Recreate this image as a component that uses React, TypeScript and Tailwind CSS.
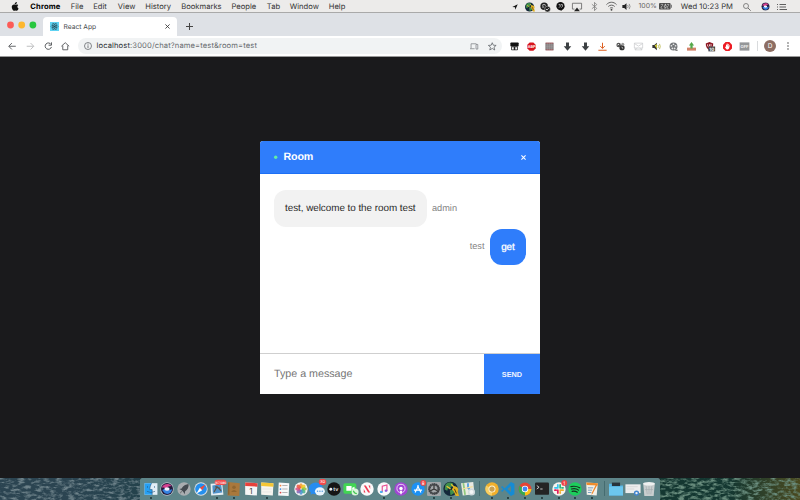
import React, { ReactNode } from "react";

const svgBase = "block shrink-0 overflow-visible";

function Icon({ size = 12, box = 24, children }: { size?: number; box?: number; children: ReactNode }) {
  return (
    <svg className={svgBase} width={size} height={size} viewBox={`0 0 ${box} ${box}`} fill="none">
      {children}
    </svg>
  );
}

const SiriShape = () => (
  <>
    <circle cx="12" cy="12" r="11.5" fill="#b9bec8" />
    <circle cx="12" cy="12" r="10.3" fill="#211b3d" />
    <path d="M3 10C5 3 15 1 20 7c-4 0-7 1-10 5-3-3-5-3-7-2z" fill="#d5408f" />
    <path d="M4 14c4-3 6-2 8-1 3 1 5 1 9-1-1 8-9 11-14 6z" fill="#3582e0" />
    <ellipse cx="12" cy="12" rx="4.5" ry="3" fill="#f5f2ff" />
  </>
);

const GlobeShape = () => (
  <>
    <circle cx="11" cy="12" r="11" fill="#14283a" />
    <path d="M3 6c4-5 9-4 12-2l-3 6-5 1-1 4-4-2zM10 14l6-1 1 5-6 4z" fill="#3f8f4c" />
    <path d="M12 5l5 5M5 8l6 4" stroke="#e8c72d" strokeWidth="2" />
    <path d="M16 8c6 0 8 4 6 8l2 7h-5l-3-7-3-3z" fill="#e2b021" />
    <path d="M17 12l3 7" stroke="#4c3a10" strokeWidth="1.5" />
  </>
);

const menuItems: [string, string][] = [
  ["Chrome", "w-[40.5px] font-bold text-black tracking-[0.12px]"],
  ["File", "w-[22.5px]"],
  ["Edit", "w-[24.5px]"],
  ["View", "w-[27.5px]"],
  ["History", "w-[36px]"],
  ["Bookmarks", "w-[50.2px]"],
  ["People", "w-[35.3px]"],
  ["Tab", "w-[23px]"],
  ["Window", "w-[39px]"],
  ["Help", "w-[30px]"],
];

function MenuBar() {
  return (
    <div className="flex h-[13px] items-center border-b border-[#a9a9a9] bg-[#ecebea] pt-px text-[7.6px] leading-none text-[#333]">
      <div className="-mt-px w-[30.3px] pl-[10.5px]">
        <Icon size={9}>
          <path fill="#111" d="M17 12.6c0-2.600 2.100-3.800 2.200-3.900-1.200-1.800-3.100-2-3.800-2-1.600-.2-3.100.9-3.900.9s-2-.9-3.300-.9C4.500 6.800 2 9.200 2 13.500 2 18 5.300 23.500 8 23.500c1.300 0 1.900-.8 3.500-.8s2.100.8 3.500.8c2.400 0 4.600-4.200 5.100-6-2-.9-3.100-2.700-3.100-4.900zM14.200 4.800C15.300 3.500 16 1.700 15.800 0c-1.600.1-3.400 1-4.500 2.300-1 1.200-1.800 3-1.600 4.600 1.700.1 3.500-.8 4.500-2.100z" />
        </Icon>
      </div>
      {menuItems.map(([label, cls]) => (
        <span key={label} className={`${cls} shrink-0 whitespace-nowrap`}>{label}</span>
      ))}
      <div className="ml-auto flex h-full w-[291.5px] shrink-0 items-center">
        <div className="flex w-[13px] justify-center">
          <Icon size={6}><path d="M1 12L23 1 13 23l-1-10z" fill="#111" /></Icon>
        </div>
        <div className="flex w-[16px] justify-center"><Icon size={10}><GlobeShape /></Icon></div>
        <div className="flex w-[14px] justify-center">
          <Icon size={10}>
            <circle cx="10" cy="10" r="9" fill="#222" /><circle cx="18" cy="17" r="7" fill="#222" stroke="#ecebea" />
            <path d="M5 8q5-4 9 0M5 12h5M14 17l3 2 4-4" stroke="#eee" strokeWidth="2" />
          </Icon>
        </div>
        <div className="flex w-[17px] justify-center">
          <Icon size={9}><circle cx="12" cy="11" r="11" fill="#111" /><path d="M10 19l4 5 3-6z" fill="#111" /><path d="M7 7h4v5l-3 3M13 7h4v5l-3 3" stroke="#ddd" strokeWidth="2" /></Icon>
        </div>
        <div className="flex w-[17px] justify-center">
          <Icon size={10}><path d="M6 17H1V3h22v14h-5" stroke="#666" strokeWidth="2" /><path d="M12 13l7 9H5z" fill="#222" /></Icon>
        </div>
        <div className="flex w-[17px] justify-center">
          <Icon size={9}><path d="M5 6l13 11-6 6V1l6 6L5 18" stroke="#777" strokeWidth="2" /></Icon>
        </div>
        <div className="flex w-[17px] justify-center">
          <Icon size={11}>
            <path d="M1 8c6-7 16-7 22 0M5 12c4-4 10-4 14 0M8.500 16c2-2 5-2 7 0" stroke="#555" strokeWidth="2" />
            <circle cx="12" cy="19" r="2" fill="#444" />
          </Icon>
        </div>
        <div className="flex w-[14px] justify-center">
          <Icon size={9}><path d="M1 8h5l6-5v18l-6-5H1z" fill="#222" /><path d="M15 8q3 4 0 8M19 5q5 7 0 14" stroke="#777" strokeWidth="2" /></Icon>
        </div>
        <span className="ml-[5px] w-[20.5px] shrink-0 whitespace-nowrap text-[6.9px] text-[#666]">100%</span>
        <svg className={svgBase} width="13" height="6.500" viewBox="0 0 28 14">
          <rect width="25" height="14" rx="2" fill="#4d4d4d" />
          <path d="M26 4h2v6h-2z" fill="#777" />
          <path d="M4 3h4l-4 8h4M17 3h4l-4 8h4M11 8l3-6v4h2l-3 6V8z" stroke="#eee" strokeWidth="1.300" />
        </svg>
        <span className="ml-[8.800px] w-[59px] shrink-0 whitespace-nowrap tracking-[0.050px]">Wed 10:23 PM</span>
        <div className="ml-[1.500px] flex w-[12px] justify-center">
          <Icon size={8}><circle cx="9" cy="9" r="7.500" stroke="#555" strokeWidth="2" /><path d="M15 15l8 8" stroke="#555" strokeWidth="2.500" /></Icon>
        </div>
        <div className="ml-[6.500px] flex w-[12px] justify-center"><Icon size={9}><SiriShape /></Icon></div>
        <div className="ml-[5px]">
          <svg className={svgBase} width="10" height="6" viewBox="0 0 20 12">
            <path d="M0 1h2M0 6h2M0 11h2M5 1h13M5 6h13M5 11h15" stroke="#444" strokeWidth="1.700" />
          </svg>
        </div>
      </div>
    </div>
  );
}

function TabStrip() {
  return (
    <div className="flex h-[23px] items-end bg-[#dee1e6]">
      <div className="flex h-full w-[43px] shrink-0 items-center pl-[7px] pt-px">
        <svg className={svgBase} width="30" height="8">
          <circle cx="3.500" cy="4" r="3.400" fill="#fc5b57" />
          <circle cx="14.700" cy="4" r="3.400" fill="#fdb72e" />
          <circle cx="25.900" cy="4" r="3.400" fill="#28c73f" />
        </svg>
      </div>
      <div className="flex h-[19px] w-[134px] shrink-0 items-center rounded-t-[4px] bg-white pl-[7px]">
        <span className="flex size-[9px] items-center justify-center bg-[#5fd3f3]">
          <Icon size={9}>
            <g stroke="#24434d" strokeWidth="1.300">
              <ellipse cx="12" cy="12" rx="9.500" ry="3.800" />
              <ellipse cx="12" cy="12" rx="9.500" ry="3.800" transform="rotate(60 12 12)" />
              <ellipse cx="12" cy="12" rx="9.500" ry="3.800" transform="rotate(120 12 12)" />
            </g>
            <circle cx="12" cy="12" r="2.200" fill="#24434d" />
          </Icon>
        </span>
        <span className="ml-[4.500px] w-[101px] whitespace-nowrap pt-px text-[6.700px] leading-none text-[#45484c]">React App</span>
        <Icon size={5}><path d="M2 2l20 20M22 2L2 22" stroke="#333" strokeWidth="4" /></Icon>
      </div>
      <div className="flex h-[19px] w-[24px] items-center justify-center">
        <Icon size={7}><path d="M12 0v24M0 12h24" stroke="#444" strokeWidth="3.500" /></Icon>
      </div>
    </div>
  );
}

const downArrow = <path d="M8 1h8v10h6L12 23 2 11h6z" fill="#3c4043" />;

const extensions: ReactNode[] = [
  <><path d="M3 1h18q2 0 2 2v8H1V3q0-2 2-2z" fill="#111" /><path d="M3 11h18v9q0 2-2 2H5q-2 0-2-2z" fill="#222" /><rect x="5" y="14" width="5" height="6" fill="#f3f3f3" /><rect x="14" y="14" width="5" height="6" fill="#f3f3f3" /></>,
  <><path d="M7 1h10l6 6v10l-6 6H7l-6-6V7z" fill="#d8141c" /><text x="12" y="16" textAnchor="middle" fontSize="10" fontWeight="bold" fill="#fff">ABP</text></>,
  <><path d="M1 2h22v20H1z" fill="#857f80" /><path d="M2 3h20M2 21h20" stroke="#b24b50" strokeWidth="2" /><path d="M2 8h20M2 12h20M2 16h20M7 3v18M12 3v18M17 3v18" stroke="#a9a6a7" /></>,
  downArrow,
  downArrow,
  <path d="M12 2v15M6 11l6 6 6-6M1 22h22" stroke="#dc5b1c" strokeWidth="2.600" />,
  <><circle cx="7" cy="8" r="6" fill="#555" /><circle cx="16" cy="15" r="7" fill="#333" /><circle cx="18" cy="6" r="4" fill="#999" /><path d="M4 8l4-2M15 14l4 3" stroke="#eee" strokeWidth="2.500" /></>,
  <path d="M1 3h22v13H1zM1 4l11 7 11-7M3 16v5h18v-5M3 21l6-5M21 21l-6-5" stroke="#c5c7c9" strokeWidth="1.800" />,
  <><path d="M1 8h5l7-6v20l-7-6H1z" fill="#333" /><path d="M7 9l6-4v13z" fill="#d8d33a" /><path d="M16 8q3 4 0 8M20 5q4 7 0 14" stroke="#b0ad35" strokeWidth="2" /></>,
  <><circle cx="12" cy="12" r="10.500" fill="#74777a" /><path d="M17 22h6" stroke="#666" strokeWidth="3" /><g fill="#e9e9e9"><circle cx="12" cy="6" r="2.300" /><circle cx="6.500" cy="10" r="2.300" /><circle cx="17.500" cy="10" r="2.300" /><circle cx="9" cy="17" r="2.300" /><circle cx="15" cy="17" r="2.300" /></g></>,
  <><path d="M0 15h24v8H0z" fill="#d38168" /><path d="M9 17V9H5l7-9 7 9h-4v8z" fill="#55a84a" /></>,
  <><path d="M12 0l10 4c0 9-3 14-10 18C5 18 2 13 2 4z" fill="#8c1420" /><path d="M7 6v5q3 4 5 0V6M16 5v8" stroke="#fff" strokeWidth="2" /><rect x="9" y="12" width="18" height="13" fill="#444" /><text x="18" y="23" textAnchor="middle" fontSize="12" fontWeight="bold" fill="#fff">10</text></>,
  <><path d="M7 0h10l7 7v10l-7 7H7l-7-7V7z" fill="#ec1b23" /><path d="M8 18l-3-5 2-1 1 2V7h2v5-8h2v8l1-7h2v8l2-5 1 1-2 8-3 3h-3z" fill="#fff" /></>,
  <><path d="M-1 1h26v22H-1z" fill="#949698" /><text x="12" y="16" textAnchor="middle" fontSize="11" fontWeight="bold" fill="#eee">OFF</text></>,
];

function Toolbar() {
  return (
    <div className="flex h-[21px] items-center border-b border-[#999] bg-white">
      <div className="flex w-[78px] shrink-0 items-center gap-[9.300px] pl-[8px]">
        <Icon size={8.5}><path d="M22 12H3M11 3l-9 9 9 9" stroke="#505356" strokeWidth="2.500" /></Icon>
        <Icon size={8.5}><path d="M2 12h19M13 3l9 9-9 9" stroke="#b5b7b9" strokeWidth="2.500" /></Icon>
        <Icon size={8.5}><path d="M20 7a9 9 0 1 0 1 7M21 1v8h-8" stroke="#505356" strokeWidth="2.700" /></Icon>
        <Icon size={8.5}><path d="M1 12L12 2l11 10M5 10v12h14V10" stroke="#505356" strokeWidth="2.500" /></Icon>
      </div>
      <div className="flex h-[16px] w-[424px] shrink-0 items-center rounded-full bg-[#f1f3f4] px-[6px]">
        <Icon size={8}><circle cx="12" cy="12" r="10.500" stroke="#5f6368" strokeWidth="2.300" /><path d="M12 10v8M12 5v3" stroke="#5f6368" strokeWidth="2.500" /></Icon>
        <span className="ml-[4.500px] whitespace-nowrap text-[7.600px] leading-none tracking-[0.120px] text-[#686b6f]">
          <span className="text-[#2c2f33]">localhost</span>:3000/chat?name=test&amp;room=test
        </span>
        <div className="ml-auto flex items-center gap-[9px]">
          <Icon size={8.5}><path d="M3 18V5h15M0 19h13M17 7h5v13h-5z" stroke="#777a7e" strokeWidth="2" /></Icon>
          <Icon size={8.5}><path d="M12 2l3 7 8 .6-6 5 2 8-7-4.400-7 4.400 2-8-6-5L9 9z" stroke="#5f6368" strokeWidth="2.200" /></Icon>
        </div>
      </div>
      <div className="ml-[3.300px] flex shrink-0">
        {extensions.map((shape, i) => (
          <div key={i} className="flex w-[17.750px] justify-center"><Icon size={9}>{shape}</Icon></div>
        ))}
      </div>
      <span className="ml-[3.200px] h-[10px] w-px shrink-0 bg-[#d9dbdd]" />
      <span className="ml-[6px] flex size-[12px] shrink-0 items-center justify-center rounded-full bg-[#8d6e63] text-[6.500px] leading-none text-white">D</span>
      <div className="ml-[8px]"><Icon size={8}><g fill="#555"><circle cx="12" cy="3" r="2.500" /><circle cx="12" cy="12" r="2.500" /><circle cx="12" cy="21" r="2.500" /></g></Icon></div>
    </div>
  );
}

function Chat() {
  return (
    <div className="flex h-[253px] w-[280px] flex-col overflow-hidden rounded-t-[3px] bg-white font-['Liberation_Sans',Arial,sans-serif] [text-rendering:geometricPrecision]">
      <header className="flex h-[33px] shrink-0 items-center border-b border-[#1c6ff5] bg-[#2f7dfb] px-[14px] text-white">
        <svg className={svgBase} width="4" height="4"><circle cx="1.700" cy="2.200" r="1.700" fill="#62eda6" /></svg>
        <span className="ml-[5.500px] pt-[1.500px] text-[10.700px] font-bold leading-none tracking-[-0.150px]">Room</span>
        <span className="ml-auto"><Icon size={5}><path d="M2 2l20 20M22 2L2 22" stroke="#fff" strokeWidth="5" /></Icon></span>
      </header>
      <main className="flex flex-1 flex-col gap-[2px] px-[14px] pt-[16px]">
        <div className="flex items-center">
          <div className="flex h-[36.500px] w-[152.500px] items-center rounded-[12px] bg-[#f2f2f2] pl-[11px] pt-[2px] text-[9.900px] leading-none tracking-[-0.040px] text-[#2b2b2b]">
            <span className="whitespace-nowrap">test, welcome to the room test</span>
          </div>
          <span className="ml-[5.500px] text-[9.200px] leading-none text-[#828282]">admin</span>
        </div>
        <div className="flex items-center justify-end">
          <span className="mr-[5.500px] text-[9.200px] leading-none text-[#828282]">test</span>
          <div className="flex h-[36.500px] w-[36px] items-center justify-center rounded-[12px] bg-[#2f7dfb] pt-[2px] text-[9.900px] leading-none text-white [-webkit-text-stroke:0.300px_white]">get</div>
        </div>
      </main>
      <footer className="flex h-[41px] shrink-0 border-t border-[#cfcfcf]">
        <div className="flex flex-1 items-center pl-[14px] text-[10.700px] leading-none text-[#757575]">Type a message</div>
        <button className="w-[56px] bg-[#2f7dfb] pt-px text-[7.300px] font-bold leading-none text-[#eef4ff]">SEND</button>
      </footer>
    </div>
  );
}

type DockItem = { art: ReactNode; running?: boolean };
const sep = "sep" as const;

const chromeRing = (
  <>
    <circle cx="12" cy="12" r="11" fill="#e54335" />
    <path d="M12 12L2.500 6.500A11 11 0 0 0 12 23z" fill="#36a853" />
    <path d="M12 12h11A11 11 0 0 1 12 23z" fill="#fbc116" />
    <circle cx="12" cy="12" r="5.500" fill="#fff" /><circle cx="12" cy="12" r="4.200" fill="#4285f4" />
  </>
);

const dock: (DockItem | typeof sep)[] = [
  { running: true, art: <><path d="M1 2h22v20H1z" fill="#e2eef7" /><path d="M1 2h12c-2 4-3 7-3 11h4v9H1z" fill="#26a0f3" /><path d="M6 7v3M18 7v3M5 16q7 4 14 0M13 2c-2 4-3 7-3 11h4v9" stroke="#24567e" strokeWidth="1" /></> },
  { art: <SiriShape /> },
  { art: <><circle cx="12" cy="12" r="11.500" fill="#a9adb0" /><path d="M20 4c-7 0-10 4-12 7l-4 1 4 2 3 3 2 4 1-5c4-3 6-6 6-12z" fill="#444a50" /><path d="M6 17l3-2-3 5z" fill="#555" /></> },
  { art: <><circle cx="12" cy="12" r="11.500" fill="#d9dfe4" /><circle cx="12" cy="12" r="10" fill="#2490ee" /><path d="M20 4l-6 10-4-4z" fill="#f04a3c" /><path d="M4 20l6-10 4 4z" fill="#fff" /></> },
  { running: true, art: <><path d="M1 3l20-1 2 20-21 1z" fill="#e4edf3" /><path d="M4 6l15-2 2 14-16 2z" fill="#4f91c9" /><path d="M7 17l5-9 7 7M9 8l8 3" stroke="#5b5347" strokeWidth="2" /><rect x="8" y="-4" width="20" height="9" rx="4.500" fill="#f34a4a" /><text x="18" y="3" textAnchor="middle" fontSize="5.500" fill="#fff">167,986</text></> },
  { running: true, art: <><path d="M2 0l20 2-1 22-20-1z" fill="#a9783c" /><path d="M3 1v21" stroke="#8a6030" strokeWidth="2" /><circle cx="12" cy="9" r="3" fill="#8f6630" /><path d="M7 17q5-7 10 0z" fill="#8f6630" /></> },
  { art: <><path d="M2 1l21 1-1 21-20-1z" fill="#f6f6f6" /><path d="M2 1l21 1v6L2 7z" fill="#e8413b" /><text x="12" y="20" textAnchor="middle" fontSize="14" fill="#444">1</text></> },
  { running: true, art: <><path d="M2 1l21 1-1 21-20-1z" fill="#f6f5ef" /><path d="M2 1l21 1v6L2 7z" fill="#f4c634" /><path d="M4 12h16M4 17h16" stroke="#ddd" /></> },
  { art: <><path d="M3 1l18 1-1 22-18-1z" fill="#f8f8f8" /><path d="M9 6h9M9 12h9M9 18h9" stroke="#aaa" strokeWidth="1.500" /><circle cx="6" cy="6" r="1.500" fill="#f7823d" /><circle cx="6" cy="12" r="1.500" fill="#3b89e0" /><circle cx="6" cy="18" r="1.500" fill="#e34545" /></> },
  { art: <><circle cx="12" cy="12" r="11.500" fill="#f5f5f5" />{["#f59b29", "#f2c51b", "#8fc23d", "#45b38b", "#4592cf", "#8263b4", "#d04f86", "#ec5440"].map((c, i) => <ellipse key={c} cx="12" cy="6.500" rx="3" ry="4.500" fill={c} opacity=".85" transform={`rotate(${i * 45} 12 12)`} />)}</> },
  { art: <><ellipse cx="10" cy="11" rx="12" ry="10" fill="#278cf0" /><path d="M2 16l-1 6 6-3z" fill="#278cf0" /><ellipse cx="17" cy="16" rx="8.500" ry="7" fill="#e9f4fc" /><g fill="#579bdc"><circle cx="13" cy="16" r="1.300" /><circle cx="17" cy="16" r="1.300" /><circle cx="21" cy="16" r="1.300" /></g><rect x="15" y="-5" width="13" height="10" rx="5" fill="#f34a4a" /><text x="21.500" y="2.500" textAnchor="middle" fontSize="7" fill="#fff">30</text></> },
  { art: <><circle cx="12" cy="12" r="11.500" fill="#151515" /><circle cx="6.500" cy="12.500" r="2.500" fill="#eee" /><text x="15" y="15.500" textAnchor="middle" fontSize="9" fontWeight="bold" fill="#ddd">tv</text></> },
  { art: <><rect x="-1" y="2" width="22" height="18" rx="3" fill="#42d653" /><path d="M4 7h9v8H4zM14 10l4-2v7l-4-2z" fill="#fff" /><circle cx="19" cy="17" r="6" fill="#d9f5dc" /><path d="M16 15q2 5 6 5" stroke="#42c452" strokeWidth="2" /></> },
  { art: <><circle cx="12" cy="12" r="11.500" fill="#fafafa" /><path d="M6.500 6H10l7.500 12H14z" fill="#ef3a51" /><path d="M14.500 6h3v6zM6.500 12l3 6h-3z" fill="#ef3a51" /></> },
  { running: true, art: <><circle cx="12" cy="12" r="11.500" fill="#f9f9fb" /><path d="M9 17V7l8-2v10" stroke="#e84d91" strokeWidth="2" /><ellipse cx="7.500" cy="17" rx="2.500" ry="2" fill="#4bacee" /><ellipse cx="15.500" cy="15" rx="2.500" ry="2" fill="#945bdc" /></> },
  { art: <><circle cx="12" cy="12" r="11.500" fill="#a045d3" /><circle cx="12" cy="11" r="7" stroke="#f0dffa" strokeWidth="1.500" /><circle cx="12" cy="11" r="3" fill="#fff" /><path d="M10 15h4l-1 6h-2z" fill="#fff" /></> },
  { art: <><circle cx="12" cy="12" r="11.500" fill="#1c91f4" /><path d="M7 18l6-12M11 6l6 12M5 14h14" stroke="#fff" strokeWidth="2" /><circle cx="21" cy="1.500" r="5" fill="#ef4444" /><text x="21" y="4.500" textAnchor="middle" fontSize="8" fill="#fff">8</text></> },
  { running: true, art: <><rect x="0" y="0" width="24" height="24" rx="2" fill="#a2a6a9" /><circle cx="12" cy="12" r="8" stroke="#37393c" strokeWidth="4" strokeDasharray="2.500 .8" /><circle cx="12" cy="12" r="8" stroke="#44474a" strokeWidth="2" /><path d="M12 12V5M12 12l6 3M12 12l-6 3" stroke="#333" strokeWidth="2" /></> },
  { running: true, art: <g transform="scale(1.120) translate(-1 -1.500)"><GlobeShape /></g> },
  { art: <><path d="M0 2l21-2 2 21-20 2z" fill="#e9eae2" /><path d="M4 2l3 20" stroke="#8fc97c" strokeWidth="3" /><path d="M12 2v8l4 4" stroke="#4c9ce0" strokeWidth="3" /><path d="M2 12l18-4" stroke="#f1dd98" strokeWidth="2" /><circle cx="18" cy="17" r="6" fill="#d0dadd" /><circle cx="18" cy="17" r="3.500" fill="#f3f6f6" /></> },
  sep,
  { running: true, art: <><circle cx="12" cy="12" r="11.500" fill="#f1b02c" /><path d="M12 12L2 6a11.500 11.500 0 0 0 10 17z" fill="#f7cf65" /><circle cx="12" cy="12" r="6" fill="#fff5d7" /><circle cx="12" cy="12" r="4.500" fill="#c9a052" /></> },
  { running: true, art: <><path d="M17 0l6 3v18l-6 3L6 13l-4 4-2-2 4-3-4-3 2-2 4 4z" fill="#168bd3" /><path d="M17 7v10l-6-5z" fill="#5e8587" /></> },
  { running: true, art: chromeRing },
  { running: true, art: <><rect x="0" y="1" width="24" height="21" rx="2" fill="#242424" /><path d="M3 6l4 3-4 3M9 12h4" stroke="#ddd" strokeWidth="1.500" /></> },
  { running: true, art: <><circle cx="12" cy="12" r="11.500" fill="#f7f3ef" /><g strokeWidth="3" strokeLinecap="round"><path d="M10 5v4M5 10h5" stroke="#36c5f0" /><path d="M14 5v5M19 10h-2" stroke="#2eb67d" /><path d="M14 14h5M14 17v2" stroke="#ecb22e" /><path d="M5 14h2M10 14v5" stroke="#e01e5a" /></g><circle cx="21" cy="1.500" r="5" fill="#ef4444" /><text x="21" y="4.500" textAnchor="middle" fontSize="8" fill="#fff">1</text></> },
  { running: true, art: <><circle cx="12" cy="12" r="11.500" fill="#1dce5c" /><path d="M5 8q8-2 15 2M6 12q7-2 12 2M7 16q5-1 9 1.500" stroke="#17301f" strokeWidth="2" strokeLinecap="round" /></> },
  { running: true, art: <><path d="M2 1l20 1-2 21-17-1z" fill="#f2f0e9" /><path d="M2 1l20 1v4L3 5z" fill="#ef8c2c" /><path d="M5 10h9M5 14h7M5 18h6" stroke="#6997bd" strokeWidth="1.500" /><path d="M21 5l-8 15-2 2 1-4 7-14z" fill="#f08627" /></> },
  sep,
  { art: <><path d="M0 3h9l2 3h13v17H0z" fill="#55b6e6" /><path d="M5 1h14v6H5z" fill="#28333b" /><path d="M0 8h24v15H0z" fill="#6cc7ee" /></> },
  { art: <><path d="M-1 4h26v15H-1z" fill="#eceded" /><path d="M1 8h19M1 12h13" stroke="#ccc" /><circle cx="18" cy="19" r="4.500" fill="#4285cf" /><circle cx="18" cy="19" r="2" fill="#eee" /></> },
  { art: <><path d="M2 2h20l-2 22H4z" fill="#c9cecf" /><ellipse cx="12" cy="3" rx="10" ry="3" fill="#eef0f0" /><path d="M7 7l2 14M12 7v14M17 7l-2 14M5 13h14" stroke="#a8afb1" strokeWidth="1.200" /></> },
];

function Dock() {
  return (
    <div className="flex h-[22px] w-[520px] shrink-0 rounded-t-[2px] bg-[#5e8589] pl-[2.200px]">
      {dock.map((item, i) =>
        item === sep ? (
          <span key={i} className="flex w-[7.500px] shrink-0 justify-center pt-[3px]"><i className="h-[15px] w-px bg-[#456c70]" /></span>
        ) : (
          <div key={i} className="flex w-[16.700px] shrink-0 flex-col items-center pt-[3.700px]">
            <Icon size={14}>{item.art}</Icon>
            {item.running && <svg className="mt-[1.500px] block" width="2" height="2"><circle cx="1" cy="1" r=".9" fill="#14282b" /></svg>}
          </div>
        ),
      )}
    </div>
  );
}

function Water({ id, width, from, to, foam, seed }: { id: string; width: number; from: string; to: string; foam: string; seed: number }) {
  return (
    <svg className="block shrink-0" width={width} height="22">
      <defs>
        <linearGradient id={`${id}-tone`}><stop offset="0.500" stopColor={from} /><stop offset="1" stopColor={to} /></linearGradient>
        <filter id={`${id}-foam`} x="0" y="0" width="100%" height="100%" colorInterpolationFilters="sRGB">
          <feTurbulence type="fractalNoise" baseFrequency="0.16 0.36" numOctaves="3" seed={seed} />
          <feColorMatrix values={foam} />
        </filter>
      </defs>
      <rect width={width} height="22" fill={`url(#${id}-tone)`} />
      <rect width={width} height="22" filter={`url(#${id}-foam)`} />
    </svg>
  );
}

export default function App() {
  return (
    <div className="flex h-[500px] w-[800px] flex-col overflow-hidden bg-[#1b1b1d] font-[Inter,'Liberation_Sans',sans-serif] [text-rendering:geometricPrecision]">
      <MenuBar />
      <TabStrip />
      <Toolbar />
      <div className="flex flex-1 justify-center bg-[#1a1a1c] pt-[84px]"><Chat /></div>
      <div className="flex h-[22px] shrink-0 bg-[#1a1a1c]">
        <Water id="left" width={140} from="#2b4451" to="#24424c" foam="0 0 0 0 0.430  0 0 0 0 0.510  0 0 0 0 0.540  3 0 0 0 -1.300" seed={4} />
        <Dock />
        <Water id="right" width={140} from="#143731" to="#4a491f" foam="0 0 0 0 0.420  0 0 0 0 0.560  0 0 0 0 0.500  3 0 0 0 -1.250" seed={9} />
      </div>
    </div>
  );
}
